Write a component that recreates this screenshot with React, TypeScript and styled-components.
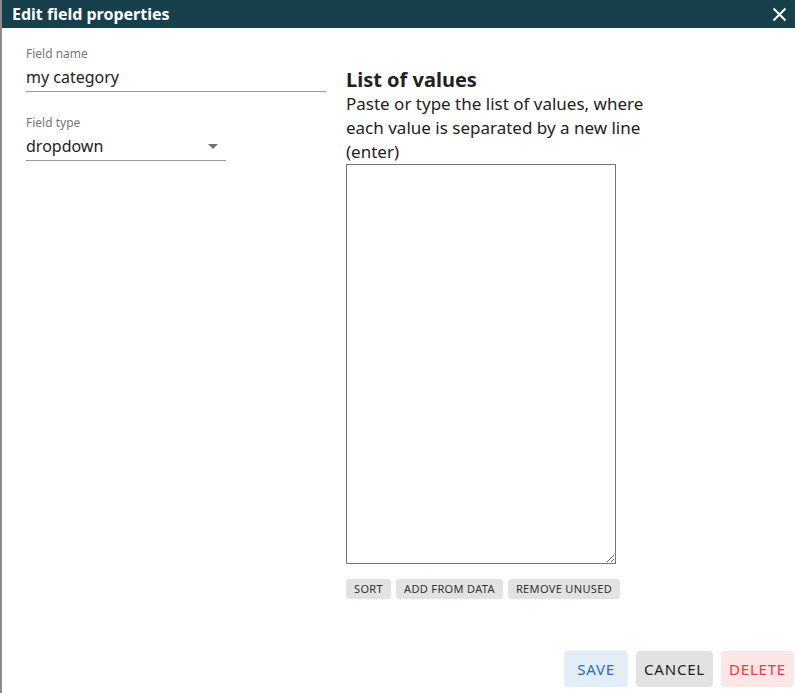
import React from "react";
import styled, { createGlobalStyle } from "styled-components";

const GlobalStyle = createGlobalStyle`
  html, body { margin: 0; padding: 0; height: 100%; background: #ffffff; }
  #root { height: 100%; }
  * { box-sizing: border-box; }
  body { font-family: "Noto Sans", "Open Sans", sans-serif; color: #222; }
`;

const Screen = styled.div`
  display: flex;
  height: 693px;
  width: 795px;
  overflow: hidden;
`;

const Backdrop = styled.div`
  width: 2px;
  flex: none;
  background: #8b8b8b;
`;

const Dialog = styled.div`
  flex: 1;
  display: flex;
  flex-direction: column;
  background: #fff;
`;

const Header = styled.div`
  height: 28px;
  background: #173f4c;
  display: flex;
  align-items: center;
  justify-content: space-between;
  padding: 0 8px 0 10px;
`;

const Title = styled.h1`
  margin: 0;
  font-size: 16px;
  font-weight: 700;
  color: #fff;
  line-height: 20px;
`;

const CloseButton = styled.button`
  border: none;
  background: transparent;
  padding: 0;
  width: 16px;
  height: 16px;
  display: flex;
  align-items: center;
  justify-content: center;
  cursor: pointer;
`;

const Body = styled.div`
  flex: 1;
  display: flex;
  gap: 20px;
  padding: 18px 0 0 24px;
`;

const LeftColumn = styled.div`
  width: 300px;
  display: flex;
  flex-direction: column;
  gap: 23px;
  margin-top: 0;
`;

const Field = styled.div<{ $width: number }>`
  width: ${(p) => p.$width}px;
  display: flex;
  flex-direction: column;
`;

const Label = styled.label`
  font-size: 12px;
  line-height: 16px;
  color: #777;
`;

const TextInput = styled.div`
  font-size: 16px;
  line-height: 24px;
  padding: 3px 0 2px;
  border-bottom: 1px solid #999;
  color: #222;
`;

const SelectBox = styled.div`
  font-size: 16px;
  line-height: 24px;
  padding: 3px 8px 2px 0;
  border-bottom: 1px solid #999;
  color: #222;
  display: flex;
  align-items: center;
  justify-content: space-between;
`;

const Caret = styled.span`
  width: 0;
  height: 0;
  border-left: 5px solid transparent;
  border-right: 5px solid transparent;
  border-top: 5px solid #757575;
  margin-top: 1px;
`;

const RightColumn = styled.div`
  width: 310px;
  display: flex;
  flex-direction: column;
  padding-top: 22px;
`;

const Heading = styled.h2`
  margin: 0;
  font-size: 20px;
  font-weight: 700;
  line-height: 24px;
  color: #222;
`;

const Description = styled.p`
  margin: 0;
  width: 305px;
  font-size: 17px;
  line-height: 24px;
  color: #222;
`;

const ValuesArea = styled.textarea`
  margin: 0;
  width: 270px;
  height: 400px;
  border: 1px solid #767676;
  border-radius: 0;
  font-family: inherit;
  font-size: 14px;
  padding: 2px;
`;

const SmallButtons = styled.div`
  display: flex;
  gap: 5px;
  margin-top: 15px;
`;

const SmallButton = styled.button`
  height: 20px;
  border: none;
  border-radius: 3px;
  background: #e2e2e2;
  color: #333;
  font-family: "Noto Sans", sans-serif;
  font-size: 11px;
  letter-spacing: 0.35px;
  padding: 0 8px;
  line-height: 20px;
  cursor: pointer;
`;

const Footer = styled.div`
  display: flex;
  justify-content: flex-end;
  gap: 8px;
  padding: 0 1px 6px 0;
`;

const variants = {
  save: { bg: "#e3edf8", fg: "#1f6fc6" },
  cancel: { bg: "#e2e2e2", fg: "#222222" },
  delete: { bg: "#fde6e6", fg: "#f23c3c" },
};

const ActionButton = styled.button<{ $variant: keyof typeof variants }>`
  height: 36px;
  min-width: 64px;
  padding: 0 8px;
  border: none;
  border-radius: 4px;
  background: ${(p) => variants[p.$variant].bg};
  color: ${(p) => variants[p.$variant].fg};
  font-family: "Noto Sans", sans-serif;
  font-size: 15px;
  letter-spacing: 0.8px;
  cursor: pointer;
`;

export default function App() {
  return (
    <>
      <GlobalStyle />
      <Screen>
        <Backdrop />
        <Dialog>
          <Header>
            <Title>Edit field properties</Title>
            <CloseButton aria-label="close">
              <svg width="15" height="15" viewBox="0 0 15 15">
                <path d="M1.5 1.5 L13.5 13.5 M13.5 1.5 L1.5 13.5" stroke="#fff" strokeWidth="2" />
              </svg>
            </CloseButton>
          </Header>
          <Body>
            <LeftColumn>
              <Field $width={300}>
                <Label>Field name</Label>
                <TextInput>my category</TextInput>
              </Field>
              <Field $width={200}>
                <Label>Field type</Label>
                <SelectBox>
                  <span>dropdown</span>
                  <Caret />
                </SelectBox>
              </Field>
            </LeftColumn>
            <RightColumn>
              <Heading>List of values</Heading>
              <Description>
                Paste or type the list of values, where each value is separated by a new line (enter)
              </Description>
              <ValuesArea />
              <SmallButtons>
                <SmallButton>SORT</SmallButton>
                <SmallButton>ADD FROM DATA</SmallButton>
                <SmallButton>REMOVE UNUSED</SmallButton>
              </SmallButtons>
            </RightColumn>
          </Body>
          <Footer>
            <ActionButton $variant="save">SAVE</ActionButton>
            <ActionButton $variant="cancel">CANCEL</ActionButton>
            <ActionButton $variant="delete">DELETE</ActionButton>
          </Footer>
        </Dialog>
      </Screen>
    </>
  );
}
